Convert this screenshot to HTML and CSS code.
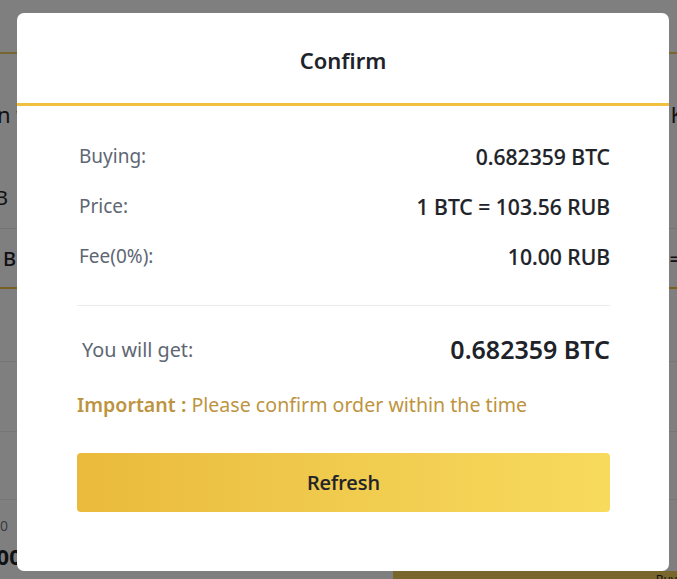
FILE: index.html
```html
<!DOCTYPE html>
<html>
<head>
<meta charset="utf-8">
<link rel="stylesheet" href="styles.css">
</head>
<body>
<div class="page">
  <div class="bg-topline"></div>
  <div class="bg-row bg-title"><span class="bg-left">n w</span><span class="bg-right">K</span></div>
  <div class="bg-row bg-input"><span class="bg-left">B</span></div>
  <div class="bg-row bg-input2"><span class="bg-left">B</span><span class="bg-right">=</span></div>
  <div class="bg-list">
    <div class="bg-item i1"></div>
    <div class="bg-item i2"></div>
    <div class="bg-item i3"></div>
  </div>
  <div class="bg-foot">
    <div class="bg-foot-left"><span class="bg-small">00</span><span class="bg-big">000</span></div>
    <div class="bg-btn"><span>Buy</span></div>
  </div>
</div>
<div class="overlay"></div>
<div class="modal">
  <div class="modal-header">Confirm</div>
  <div class="modal-body">
    <div class="row"><span class="label">Buying:</span><span class="value">0.682359 BTC</span></div>
    <div class="row"><span class="label">Price:</span><span class="value">1 BTC = 103.56 RUB</span></div>
    <div class="row"><span class="label">Fee(0%):</span><span class="value">10.00 RUB</span></div>
    <div class="divider"></div>
    <div class="row row-get"><span class="label">You will get:</span><span class="value">0.682359 BTC</span></div>
    <div class="important"><span class="imp-strong">Important :</span> Please confirm order within the time</div>
    <button class="refresh">Refresh</button>
  </div>
</div>
</body>
</html>
```
FILE: styles.css
```css
* { box-sizing: border-box; }
html, body { margin: 0; padding: 0; }
body {
  width: 677px;
  height: 579px;
  overflow: hidden;
  position: relative;
  background: #ffffff;
  font-family: "Noto Sans", "Open Sans", sans-serif;
  color: #1e2329;
}
.page {
  display: flex;
  flex-direction: column;
  height: 579px;
}
.bg-topline {
  margin-top: 52px;
  height: 2px;
  background: #f0d060;
}
.bg-row {
  display: flex;
  justify-content: space-between;
  align-items: center;
  font-size: 20px;
  color: #1e2329;
}
.bg-title { height: 120px; font-size: 22px; }
.bg-title .bg-left { margin-left: -3px; }
.bg-title .bg-right { margin-right: -7px; }
.bg-input { height: 55px; padding-bottom: 8px; border-bottom: 1px solid #e6e8ea; }
.bg-input .bg-left { margin-left: -5px; }
.bg-input2 { height: 60px; border-bottom: 2px solid #f0c040; padding-left: 3px; font-weight: 500; }
.bg-input2 .bg-right { margin-right: -4px; }
.bg-list { display: flex; flex-direction: column; }
.bg-item { border-bottom: 1px solid #eaecef; }
.i1 { height: 73px; }
.i2 { height: 70px; }
.i3 { height: 68px; }
.bg-foot { flex: 1; display: flex; justify-content: space-between; align-items: flex-end; }
.bg-foot-left { display: flex; flex-direction: column; padding-bottom: 10px; }
.bg-small { font-size: 14px; color: #707a8a; margin-left: -8px; line-height: 18px; }
.bg-big { font-size: 22px; font-weight: 700; margin-left: -16px; margin-top: 8px; line-height: 26px; }
.bg-btn {
  width: 284px;
  height: 8px;
  background: #f0cc58;
  display: flex;
  justify-content: flex-end;
  font-size: 12px;
  overflow: hidden;
}
.overlay {
  position: absolute;
  inset: 0;
  background: rgba(0, 0, 0, 0.5);
}
.modal {
  position: absolute;
  left: 17px;
  top: 13px;
  width: 652px;
  height: 558px;
  background: #ffffff;
  border-radius: 7px;
  display: flex;
  flex-direction: column;
}
.modal-header {
  height: 93px;
  border-bottom: 3px solid #f0c040;
  display: flex;
  align-items: center;
  justify-content: center;
  padding-top: 4px;
  font-size: 22px;
  font-weight: 600;
  color: #1e2329;
}
.modal-body {
  padding: 25px 59px 0 60px;
  display: flex;
  flex-direction: column;
}
.row {
  height: 50px;
  display: flex;
  justify-content: space-between;
  align-items: center;
  font-size: 19px;
}
.label { color: #5e6673; padding-left: 2px; }
.value { color: #1e2329; font-weight: 500; font-size: 21.1px; -webkit-text-stroke: 0.2px #1e2329; }
.divider {
  margin-top: 24px;
  height: 1px;
  background: #eaecef;
}
.row-get { margin-top: 18px; }
.row-get .label { padding-left: 5px; font-size: 19.8px; }
.row-get .value { font-size: 25px; font-weight: 600; -webkit-text-stroke: 0; }
.important {
  margin-top: 19px;
  line-height: 24px;
  font-size: 19.6px;
  color: #bd9440;
}
.imp-strong { font-weight: 600; }
.refresh {
  margin-top: 36px;
  height: 59px;
  border: 0;
  border-radius: 4px;
  background: linear-gradient(90deg, #eaba3c 0%, #f0cb4e 50%, #f8da5c 100%);
  font-family: inherit;
  font-size: 20px;
  font-weight: 500;
  color: #1e2329;
  -webkit-text-stroke: 0.2px #1e2329;
  padding: 0;
}
```
